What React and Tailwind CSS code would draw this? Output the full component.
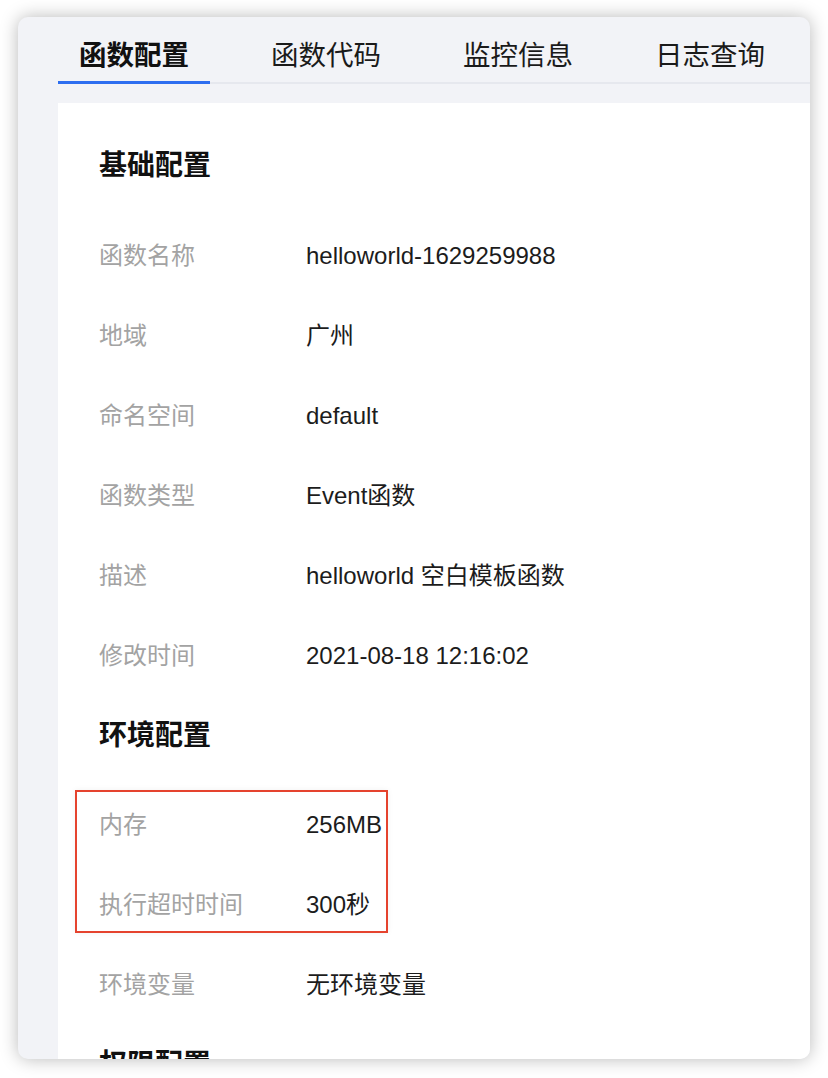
export default function App() {
  const tabs = ["函数配置", "函数代码", "监控信息", "日志查询"];
  const basic = [
    ["函数名称", "helloworld-1629259988"],
    ["地域", "广州"],
    ["命名空间", "default"],
    ["函数类型", "Event函数"],
    ["描述", "helloworld 空白模板函数"],
    ["修改时间", "2021-08-18 12:16:02"],
  ];
  const env = [
    ["内存", "256MB"],
    ["执行超时时间", "300秒"],
    ["环境变量", "无环境变量"],
  ];
  const Row = ({ label, value }) => (
    <div className="flex h-[80px] items-center text-[24px] leading-none">
      <div className="w-[207px] shrink-0 text-[#a3a3a3]">{label}</div>
      <div className="text-[#1c1c1c]">{value}</div>
    </div>
  );
  const Title = ({ children }) => (
    <div className="flex h-[80px] items-center text-[28px] font-bold leading-none text-[#111]">
      {children}
    </div>
  );
  return (
    <div className="h-[1078px] w-[828px] overflow-hidden bg-white pb-[19px] pl-[18px] pr-[18px] pt-[17px] font-['Liberation_Sans','Noto_Sans_CJK_SC',sans-serif]">
      <div className="flex h-[1042px] w-[792px] flex-col overflow-hidden rounded-[10px] bg-[#f2f3f7] pl-[40px] shadow-[0_0_18px_rgba(0,0,0,0.28)]">
        <div className="flex h-[67px] shrink-0 items-stretch gap-[40px] border-b-2 border-[#e6e8ee]">
          {tabs.map((t, i) => (
            <div
              key={t}
              className={
                i === 0
                  ? "-mb-[2px] flex items-center border-b-[3px] border-[#2d6ef0] px-[21px] pt-[14px] text-[27.5px] font-bold leading-none text-[#111]"
                  : "-mb-[2px] flex items-center border-b-[3px] border-transparent px-[21px] pt-[14px] text-[27.5px] leading-none text-[#1a1a1a]"
              }
            >
              {t}
            </div>
          ))}
        </div>
        <div className="mt-[19px] flex-1 bg-white pl-[41px] pt-[23px]">
          <Title>基础配置</Title>
          <div className="pt-[10px]">
            {basic.map(([l, v]) => (
              <Row key={l} label={l} value={v} />
            ))}
          </div>
          <Title>环境配置</Title>
          <div className="relative pt-[9px]">
            <div className="pointer-events-none absolute left-[-24px] top-[14px] h-[143px] w-[313px] border-2 border-[#e5432e] shadow-[0_0_6px_rgba(0,0,0,0.06)]" />
            {env.map(([l, v]) => (
              <Row key={l} label={l} value={v} />
            ))}
          </div>
          <Title>权限配置</Title>
        </div>
      </div>
    </div>
  );
}
